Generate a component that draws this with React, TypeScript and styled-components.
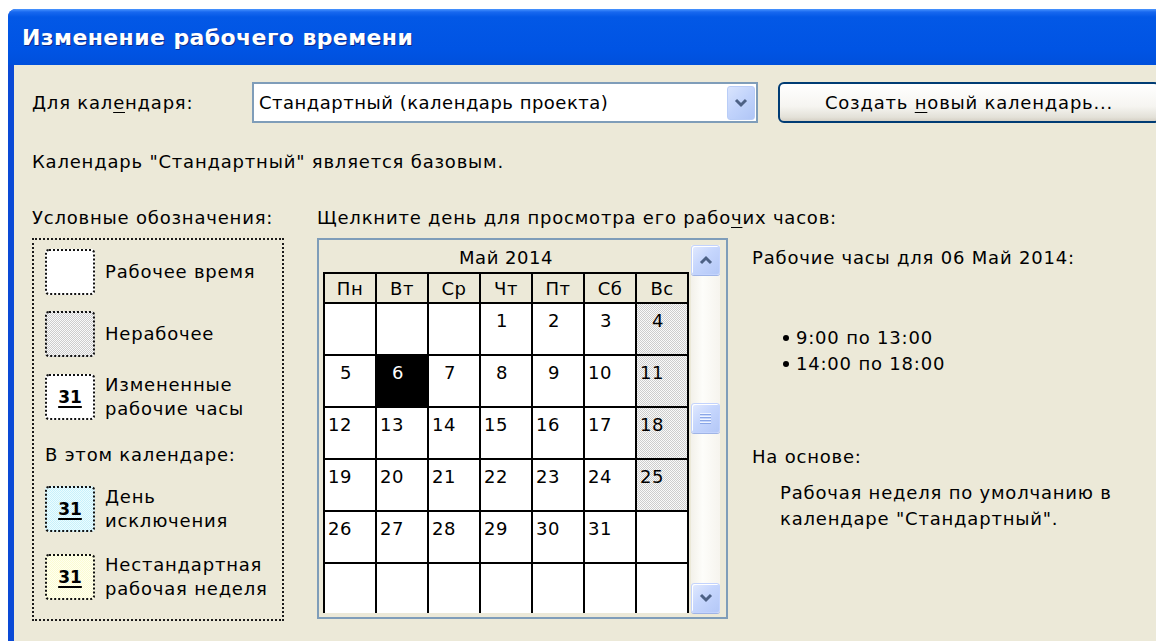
import React from "react";
import styled, { createGlobalStyle } from "styled-components";

const GlobalStyle = createGlobalStyle`
  html, body { margin: 0; padding: 0; background: #ffffff; }
  body { font-family: "DejaVu Sans", "Liberation Sans", sans-serif; }
`;

const Screen = styled.div`
  width: 1156px;
  height: 641px;
  overflow: hidden;
  box-sizing: border-box;
  padding: 9px 0 0 8px;
  background: #ffffff;
`;

const Window = styled.div`
  width: 1220px;
  height: 700px;
  display: flex;
  flex-direction: column;
  background: #0a4ad6;
  border-radius: 8px 8px 0 0;
`;

const TitleBar = styled.div`
  height: 56px;
  flex: none;
  display: flex;
  align-items: center;
  padding-left: 14px;
  border-radius: 8px 8px 0 0;
  background: linear-gradient(
    to bottom,
    #4a95ff 0px,
    #1868ef 3px,
    #0358e6 8px,
    #0054e4 40px,
    #0050dc 56px
  );
  color: #ffffff;
  font-family: "DejaVu Sans", sans-serif;
  font-weight: bold;
  font-size: 22px;
  letter-spacing: 0.4px;
  text-shadow: 1px 1px 0 #0c2c8c;
`;

const Body = styled.div`
  flex: 1;
  margin-left: 6px;
  background: #ece9d8;
  padding: 17px 0 0 18px;
  color: #000000;
  font-size: 18px;
  line-height: 26px;
  letter-spacing: 0.8px;
`;

const TopRow = styled.div`
  display: flex;
  align-items: center;
  height: 41px;
`;

const RowLabel = styled.div`
  width: 220px;
  flex: none;
`;

const Combo = styled.div`
  width: 506px;
  height: 41px;
  flex: none;
  box-sizing: border-box;
  border: 2px solid #7f9db9;
  background: #ffffff;
  display: flex;
  align-items: center;
  justify-content: space-between;
  padding-left: 5px;
  letter-spacing: 0.5px;
`;

const ComboArrow = styled.div`
  width: 28px;
  height: 34px;
  margin-right: 1px;
  box-sizing: border-box;
  border: 1px solid #b9cdf7;
  border-radius: 3px;
  background: linear-gradient(135deg, #d9e4fd 0%, #c1d3fb 50%, #b0c6f6 100%);
  display: flex;
  align-items: center;
  justify-content: center;
`;

const PushButton = styled.div`
  width: 382px;
  height: 41px;
  flex: none;
  margin-left: 20px;
  box-sizing: border-box;
  border: 2px solid #003c74;
  border-radius: 6px;
  background: linear-gradient(to bottom, #ffffff 0%, #f6f5f1 60%, #e3e1d8 90%, #d6d0c5 100%);
  display: flex;
  align-items: center;
  justify-content: center;
`;

const Mnemonic = styled.span`
  text-decoration: underline;
  text-underline-offset: 3px;
`;

const Note = styled.div`
  margin-top: 26px;
`;

const Columns = styled.div`
  display: flex;
  align-items: flex-start;
  margin-top: 30px;
`;

const Column = styled.div<{ $width?: number; $gap?: number }>`
  flex: none;
  width: ${(p) => (p.$width ? `${p.$width}px` : "auto")};
  margin-left: ${(p) => p.$gap ?? 0}px;
`;

const Heading = styled.div`
  white-space: nowrap;
  margin-bottom: 7px;
`;

const LegendBox = styled.div`
  height: 383px;
  box-sizing: border-box;
  border: 2px dotted #1a1a1a;
  padding: 9px 12px 0 11px;
`;

const LegendItem = styled.div<{ $gap?: number }>`
  display: flex;
  align-items: center;
  margin-top: ${(p) => p.$gap ?? 0}px;
  line-height: 24px;
`;

type SwatchKind = "work" | "off" | "changed" | "exception" | "custom";

// fine 1px dither used for non-working time
const dither = (a: string, b: string) =>
  `background-image: repeating-conic-gradient(${a} 0% 25%, ${b} 0% 50%); background-size: 2px 2px;`;

const offDither = dither("#cdcdcd", "#fafafa");

const swatchFill: Record<SwatchKind, string> = {
  work: "background: #ffffff;",
  off: `background-color: #e4e4e4; ${offDither}`,
  changed: "background: #ffffff;",
  exception: `background-color: #d6f6fd; ${dither("#c8f1fb", "#ecfcff")}`,
  custom: `background-color: #ffffe0; ${dither("#fbfbd2", "#ffffef")}`,
};

const Swatch = styled.div<{ $kind: SwatchKind }>`
  width: 50px;
  height: 46px;
  flex: none;
  box-sizing: border-box;
  border: 2px dotted #111111;
  border-radius: 4px;
  ${(p) => swatchFill[p.$kind]}
  display: flex;
  align-items: center;
  justify-content: center;
  font-weight: bold;
  font-size: 17px;
  letter-spacing: 0;
  margin-right: 10px;
`;

const DayMark = styled.span`
  text-decoration: underline;
  text-decoration-thickness: 2px;
  text-underline-offset: 3px;
`;

const LegendSub = styled.div`
  margin-top: 22px;
  line-height: 24px;
`;

const CalendarBox = styled.div`
  width: 411px;
  height: 381px;
  box-sizing: border-box;
  border: 2px solid #7f9db9;
  background: #ece9d8;
  display: flex;
  padding: 0 6px 4px 4px;
`;

const MonthPane = styled.div`
  width: 366px;
  display: flex;
  flex-direction: column;
`;

const MonthTitle = styled.div`
  height: 32px;
  line-height: 36px;
  text-align: center;
  letter-spacing: 0.5px;
`;

const GridClip = styled.div`
  height: 341px;
  overflow: hidden;
`;

const DayGrid = styled.div`
  display: grid;
  grid-template-columns: repeat(7, 50px);
  grid-template-rows: 28px;
  grid-auto-rows: 50px;
  gap: 2px;
  padding: 2px;
  background: #000000;
  width: max-content;
  letter-spacing: 0.5px;
`;

const WeekDay = styled.div`
  background: #ece9d8;
  text-align: center;
  line-height: 30px;
`;

const DayCell = styled.div<{ $off?: boolean; $selected?: boolean }>`
  background-color: ${(p) => (p.$selected ? "#000000" : "#ffffff")};
  color: ${(p) => (p.$selected ? "#ffffff" : "#000000")};
  ${(p) => (p.$off && !p.$selected ? offDither : "")}
  padding-top: 4px;
`;

const DayNum = styled.span`
  display: inline-block;
  width: 24px;
  margin-left: 3px;
  text-align: right;
`;

const ScrollBar = styled.div`
  width: 29px;
  height: 368px;
  margin: 5px 0 0 2px;
  display: flex;
  flex-direction: column;
  background: linear-gradient(to right, #f3f1ea 0%, #fdfdfa 40%, #f6f4ee 100%);
`;

const ScrollButton = styled.div`
  height: 30px;
  flex: none;
  box-sizing: border-box;
  border: 1px solid #c3d3fd;
  border-radius: 3px;
  background: linear-gradient(135deg, #e2eafe 0%, #c6d6fd 45%, #b4c8f7 100%);
  box-shadow: inset 1px 1px 0 #ffffff, 0 1px 0 #9fb4e6;
  display: flex;
  align-items: center;
  justify-content: center;
`;

const ScrollTrack = styled.div`
  flex: 1;
`;

const ScrollThumb = styled(ScrollButton)`
  margin-top: 128px;
  flex-direction: column;
  gap: 2px;
`;

const Grip = styled.div`
  width: 11px;
  height: 1px;
  background: #eef4ff;
  box-shadow: 0 1px 0 #8aa6e6;
`;

const InfoPane = styled.div`
  padding-top: 7px;
  white-space: nowrap;
`;

const Hours = styled.ul`
  list-style: none;
  margin: 54px 0 0 0;
  padding: 0 0 0 31px;
`;

const HourLine = styled.li`
  display: flex;
  align-items: center;
  &::before {
    content: "";
    width: 6px;
    height: 6px;
    border-radius: 50%;
    background: #000000;
    margin-right: 7px;
  }
`;

const BasedOn = styled.div`
  margin-top: 67px;
`;

const BasedText = styled.div`
  margin-top: 10px;
  padding-left: 28px;
`;

const Chevron = ({ up }: { up?: boolean }) => (
  <svg width="14" height="10" viewBox="0 0 14 10">
    <path
      d={up ? "M2 8 L7 3 L12 8" : "M2 2 L7 7 L12 2"}
      fill="none"
      stroke="#4d6185"
      strokeWidth="3"
      strokeLinejoin="miter"
    />
  </svg>
);

const weekDays = ["Пн", "Вт", "Ср", "Чт", "Пт", "Сб", "Вс"];

// May 2014 starts on a Thursday; six weeks are laid out
const cells: (number | null)[] = [];
for (let i = 0; i < 3; i++) cells.push(null);
for (let d = 1; d <= 31; d++) cells.push(d);
while (cells.length < 42) cells.push(null);

const offDays = new Set([4, 11, 18, 25]);

export default function App() {
  return (
    <Screen>
      <GlobalStyle />
      <Window>
        <TitleBar>Изменение рабочего времени</TitleBar>
        <Body>
          <TopRow>
            <RowLabel>
              Для кал<Mnemonic>е</Mnemonic>ндаря:
            </RowLabel>
            <Combo>
              <span>Стандартный (календарь проекта)</span>
              <ComboArrow>
                <Chevron />
              </ComboArrow>
            </Combo>
            <PushButton>
              <span>
                Создать <Mnemonic>н</Mnemonic>овый календарь...
              </span>
            </PushButton>
          </TopRow>

          <Note>Календарь "Стандартный" является базовым.</Note>

          <Columns>
            <Column $width={252}>
              <Heading>Условные обозначения:</Heading>
              <LegendBox>
                <LegendItem>
                  <Swatch $kind="work" />
                  Рабочее время
                </LegendItem>
                <LegendItem $gap={16}>
                  <Swatch $kind="off" />
                  Нерабочее
                </LegendItem>
                <LegendItem $gap={16}>
                  <Swatch $kind="changed">
                    <DayMark>31</DayMark>
                  </Swatch>
                  <span>
                    Измененные
                    <br />
                    рабочие часы
                  </span>
                </LegendItem>
                <LegendSub>В этом календаре:</LegendSub>
                <LegendItem $gap={18}>
                  <Swatch $kind="exception">
                    <DayMark>31</DayMark>
                  </Swatch>
                  <span>
                    День
                    <br />
                    исключения
                  </span>
                </LegendItem>
                <LegendItem $gap={20}>
                  <Swatch $kind="custom">
                    <DayMark>31</DayMark>
                  </Swatch>
                  <span>
                    Нестандартная
                    <br />
                    рабочая неделя
                  </span>
                </LegendItem>
              </LegendBox>
            </Column>

            <Column $width={411} $gap={33}>
              <Heading>
                Щелкните день для просмотра его рабо<Mnemonic>ч</Mnemonic>их часов:
              </Heading>
              <CalendarBox>
                <MonthPane>
                  <MonthTitle>Май 2014</MonthTitle>
                  <GridClip>
                    <DayGrid>
                      {weekDays.map((w) => (
                        <WeekDay key={w}>{w}</WeekDay>
                      ))}
                      {cells.map((d, i) => (
                        <DayCell
                          key={i}
                          $off={d !== null && offDays.has(d)}
                          $selected={d === 6}
                        >
                          {d !== null && <DayNum>{d}</DayNum>}
                        </DayCell>
                      ))}
                    </DayGrid>
                  </GridClip>
                </MonthPane>
                <ScrollBar>
                  <ScrollButton>
                    <Chevron up />
                  </ScrollButton>
                  <ScrollTrack>
                    <ScrollThumb>
                      <Grip />
                      <Grip />
                      <Grip />
                      <Grip />
                    </ScrollThumb>
                  </ScrollTrack>
                  <ScrollButton>
                    <Chevron />
                  </ScrollButton>
                </ScrollBar>
              </CalendarBox>
            </Column>

            <Column $gap={24}>
              <Heading>&nbsp;</Heading>
              <InfoPane>
                <div>Рабочие часы для 06 Май 2014:</div>
                <Hours>
                  <HourLine>9:00 по 13:00</HourLine>
                  <HourLine>14:00 по 18:00</HourLine>
                </Hours>
                <BasedOn>На основе:</BasedOn>
                <BasedText>
                  Рабочая неделя по умолчанию в
                  <br />
                  календаре "Стандартный".
                </BasedText>
              </InfoPane>
            </Column>
          </Columns>
        </Body>
      </Window>
    </Screen>
  );
}
